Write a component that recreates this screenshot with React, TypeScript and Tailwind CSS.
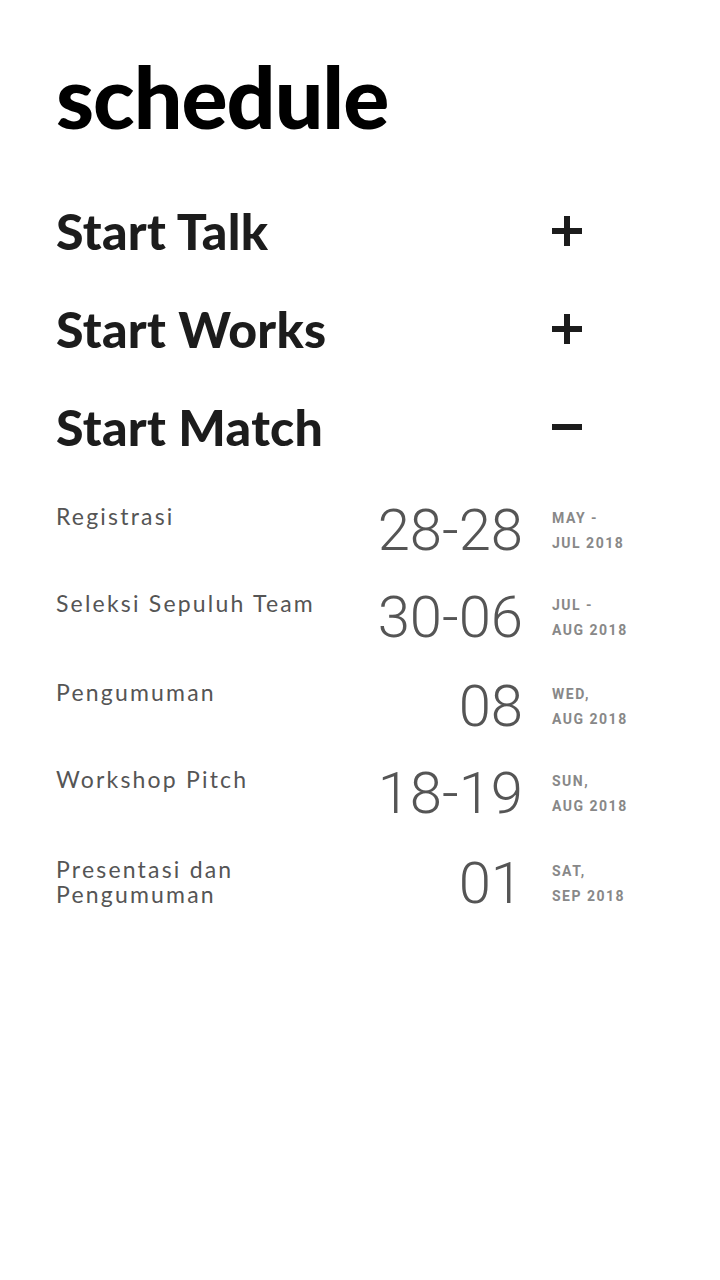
import React from 'react';

type Item = { name: string; date: string; top: string; bottom: string; h: string };

const sections = [
  { title: 'Start Talk', open: false },
  { title: 'Start Works', open: false },
  { title: 'Start Match', open: true },
];

const items: Item[] = [
  { name: 'Registrasi', date: '28-28', top: 'MAY -', bottom: 'JUL 2018', h: 'h-[87px]' },
  { name: 'Seleksi Sepuluh Team', date: '30-06', top: 'JUL -', bottom: 'AUG 2018', h: 'h-[89px]' },
  { name: 'Pengumuman', date: '08', top: 'WED,', bottom: 'AUG 2018', h: 'h-[87px]' },
  { name: 'Workshop Pitch', date: '18-19', top: 'SUN,', bottom: 'AUG 2018', h: 'h-[90px]' },
  { name: 'Presentasi dan Pengumuman', date: '01', top: 'SAT,', bottom: 'SEP 2018', h: 'h-[87px]' },
];

function Sign({ open }: { open: boolean }) {
  return (
    <svg width="30" height="30" viewBox="0 0 30 30" className="block">
      <rect x="0" y="12" width="30" height="6" fill="#1c1c1c" />
      {!open && <rect x="12" y="0" width="6" height="30" fill="#1c1c1c" />}
    </svg>
  );
}

export default function App() {
  return (
    <div className="w-[720px] h-[1280px] bg-white pl-[56px] pr-[58px] pt-[46px] font-['Lato','Liberation_Sans',sans-serif]">
      <h1 className="text-[86px] leading-[100px] font-black tracking-[-1px] text-black">schedule</h1>

      <div className="mt-[36px] flex flex-col">
        {sections.map(s => (
          <div key={s.title} className="flex items-center h-[98px]">
            <h2 className="flex-1 text-[50px] font-black text-[#1c1c1c] tracking-[0.3px]">{s.title}</h2>
            <div className="w-[110px]">
              <Sign open={s.open} />
            </div>
          </div>
        ))}
      </div>

      <div className="mt-[22px] flex flex-col">
        {items.map(it => (
          <div key={it.name} className={`flex items-start ${it.h}`}>
            <div className="w-[280px] text-[23px] leading-[25px] tracking-[2.2px] text-[#555] pt-[6px]">
              {it.name}
            </div>
            <div className="flex-1 mr-[29px] mt-[2px] text-right font-['Roboto',sans-serif] font-light text-[58px] leading-[60px] text-[#555]">
              {it.date}
            </div>
            <div className="w-[110px] font-['Roboto',sans-serif] font-bold text-[14px] leading-[25px] tracking-[1.5px] text-[#888] pt-[8px]">
              <div>{it.top}</div>
              <div>{it.bottom}</div>
            </div>
          </div>
        ))}
      </div>
    </div>
  );
}
